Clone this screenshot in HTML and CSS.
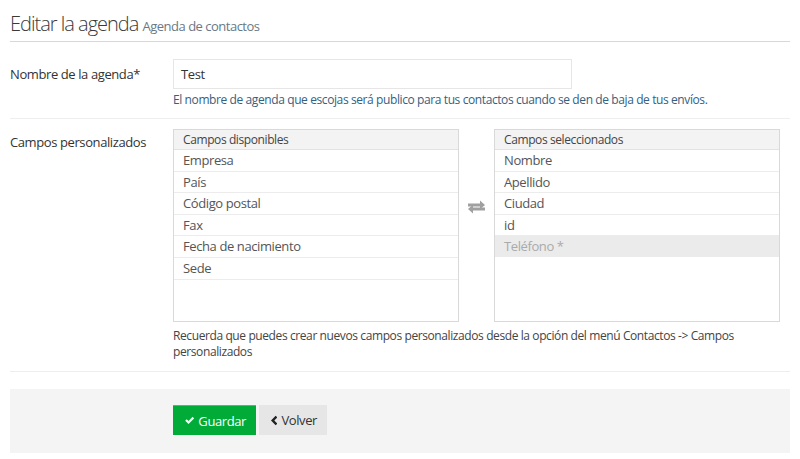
FILE: index.html
```html
<!DOCTYPE html>
<html lang="es">
<head>
<meta charset="utf-8">
<link rel="stylesheet" href="styles.css">
</head>
<body>
<div class="page">
  <div class="page-header">
    <h1>Editar la agenda <small>Agenda de contactos</small></h1>
  </div>
  <div class="form-row">
    <label class="form-label">Nombre de la agenda*</label>
    <div class="form-field">
      <div class="input">Test</div>
      <p class="help">El nombre de agenda que escojas será publico para tus contactos cuando se den de baja de tus envíos.</p>
    </div>
  </div>
  <div class="form-row second">
    <label class="form-label">Campos personalizados</label>
    <div class="form-field">
      <div class="lists">
        <div class="list">
          <div class="list-head">Campos disponibles</div>
          <div class="item">Empresa</div>
          <div class="item">País</div>
          <div class="item">Código postal</div>
          <div class="item">Fax</div>
          <div class="item">Fecha de nacimiento</div>
          <div class="item">Sede</div>
        </div>
        <div class="swap">
          <svg width="19" height="14" viewBox="0 0 19 14">
            <path d="M1 3.4h12V0.6L18 4.9 13 9.2V6.4H1z" fill="#a0a0a0"/>
            <path d="M18 7.6H6V4.8L1 9.1 6 13.4V10.6H18z" fill="#a0a0a0"/>
          </svg>
        </div>
        <div class="list">
          <div class="list-head">Campos seleccionados</div>
          <div class="item">Nombre</div>
          <div class="item">Apellido</div>
          <div class="item">Ciudad</div>
          <div class="item">id</div>
          <div class="item disabled">Teléfono *</div>
        </div>
      </div>
      <p class="note">Recuerda que puedes crear nuevos campos personalizados desde la opción del menú Contactos -&gt; Campos personalizados</p>
    </div>
  </div>
  <div class="actions">
    <button class="btn btn-success">
      <svg width="13" height="11" viewBox="0 0 13 11"><path d="M0.3 5.7 2.4 3.6 4.9 6.1 10.6 0.4 12.7 2.5 4.9 10.3z" fill="#fff"/></svg>
      Guardar</button>
    <button class="btn btn-default">
      <svg width="7" height="11" viewBox="0 0 7 11"><path d="M5 0.3 6.9 2.2 3.6 5.5 6.9 8.8 5 10.7 0 5.5z" fill="#222"/></svg>
      Volver</button>
  </div>
</div>
</body>
</html>
```

FILE: styles.css
```css
* { box-sizing: border-box; }
body {
  margin: 0;
  font-family: "Open Sans", "Noto Sans", sans-serif;
  font-size: 13px;
  letter-spacing: -0.4px;
  color: #333;
  background: #fff;
}
.page { padding: 0 10px; }
.page-header {
  border-bottom: 1px solid #d8d8d8;
  padding: 10px 0 1px;
}
.page-header h1 {
  margin: 0;
  font-weight: 300;
  font-size: 20px;
  letter-spacing: -1px;
  color: #3a3a3a;
  line-height: 27px;
}
.page-header small {
  font-weight: 400;
  font-size: 13px;
  letter-spacing: -0.5px;
  color: #6a7884;
}
.form-row {
  display: flex;
  border-bottom: 1px solid #eeeeee;
  padding: 17px 0 9px;
}
.form-row.second { padding: 10px 0 11px; }
.form-label {
  width: 163px;
  flex: none;
  line-height: 30px;
  color: #333;
}
.form-row.second .form-label { line-height: 27px; }
.form-field { flex: 1; }
.input {
  width: 399px;
  height: 30px;
  border: 1px solid #e6e6e6;
  padding: 0 7px;
  line-height: 28px;
  color: #333;
}
.help {
  margin: 2px 0 0;
  font-size: 12px;
  line-height: 18px;
  color: #33617f;
}
.lists {
  display: flex;
  align-items: flex-start;
  width: 607px;
}
.list {
  width: 286px;
  height: 193px;
  border: 1px solid #d9d9d9;
}
.list-head {
  background: #f3f3f3;
  border-bottom: 1px solid #e2e2e2;
  font-size: 12px;
  color: #444;
  padding: 0 9px;
  line-height: 19px;
}
.item {
  padding: 0 9px;
  line-height: 20.6px;
  border-bottom: 1px solid #ececec;
  color: #555;
}
.item.disabled {
  background: #ebebeb;
  color: #aaa;
  border-bottom: none;
}
.swap {
  flex: 1;
  display: flex;
  justify-content: center;
  padding-top: 71px;
}
.note {
  margin: 6px 0 0;
  font-size: 12px;
  line-height: 16px;
  color: #444;
}
.actions {
  margin-top: 17px;
  background: #f4f4f4;
  height: 64px;
  padding: 16px 0 0 163px;
  display: flex;
  align-items: flex-start;
  gap: 3px;
}
.btn {
  font-family: inherit;
  font-size: 13px;
  letter-spacing: -0.4px;
  height: 30px;
  border: none;
  padding: 0 10px 0 12px;
  display: inline-flex;
  align-items: center;
  gap: 4px;
  cursor: pointer;
}
.btn-success {
  background: #00ac37;
  color: #fff;
  width: 83px;
  border-top: 1px solid #3ac66a;
}
.btn-default {
  background: #e6e6e6;
  color: #333;
  width: 68px;
  padding-left: 12px;
}
```
